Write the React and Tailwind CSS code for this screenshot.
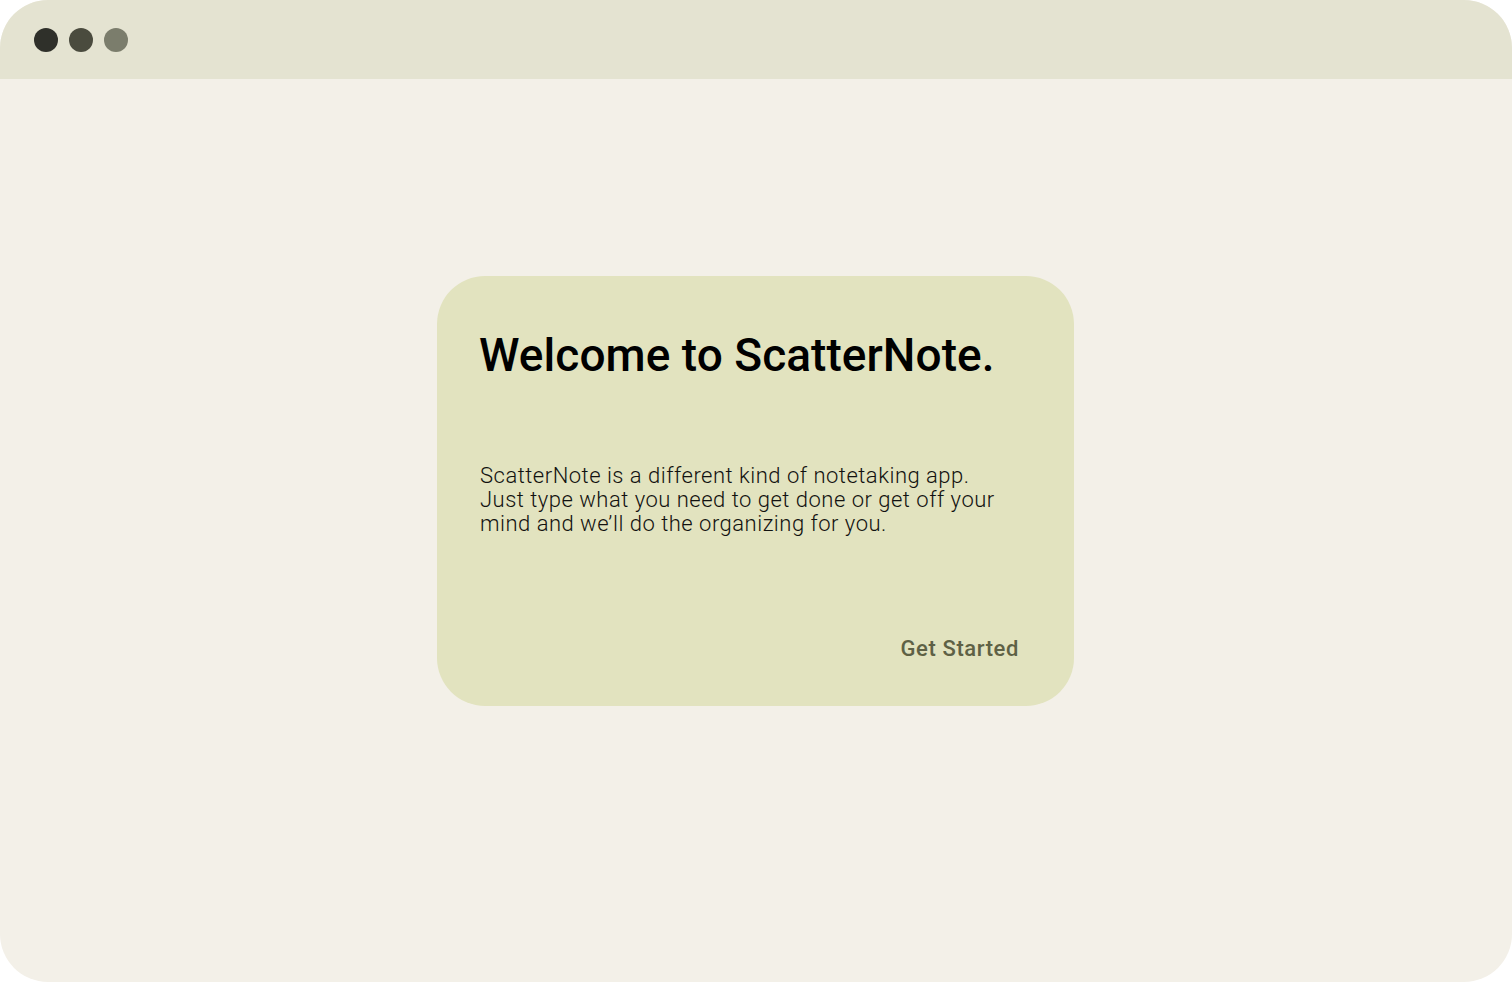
import React from 'react';

const App = () => {
  const dots = ['bg-[#2f302a]', 'bg-[#4a4b3e]', 'bg-[#7b7d6c]'];

  return (
    <div className="bg-white w-[1512px] h-[982px]" style={{ fontFamily: 'Roboto, "Liberation Sans", sans-serif' }}>
      <div className="w-full h-full rounded-[48px] overflow-hidden bg-[#f3f0e8] flex flex-col">
        <div className="h-[79px] bg-[#e4e3d1] flex items-center pl-[34px] gap-[11px] shrink-0">
          {dots.map((c, i) => (
            <div key={i} className={`w-6 h-6 rounded-full ${c}`} />
          ))}
        </div>
        <div className="flex pl-[437px] pt-[197px]">
          <div className="w-[637px] h-[430px] rounded-[48px] bg-[#e2e3bf] flex flex-col pl-[43px] pr-[55px] pt-[56px]">
            <h1 className="-ml-px text-[46px] leading-none font-medium text-black tracking-[0.05px]">
              Welcome to ScatterNote.
            </h1>
            <p className="mt-[86px] text-[22px] leading-[24px] font-light text-[#121210] tracking-[0.5px]">
              ScatterNote is a different kind of notetaking app.
              <br />
              Just type what you need to get done or get off your
              <br />
              mind and we’ll do the organizing for you.
            </p>
            <div className="mt-[101px] flex justify-end">
              <button className="text-[22px] leading-[24px] font-medium text-[#5e6145] tracking-[0.6px]">
                Get Started
              </button>
            </div>
          </div>
        </div>
      </div>
    </div>
  );
};

export default App;
